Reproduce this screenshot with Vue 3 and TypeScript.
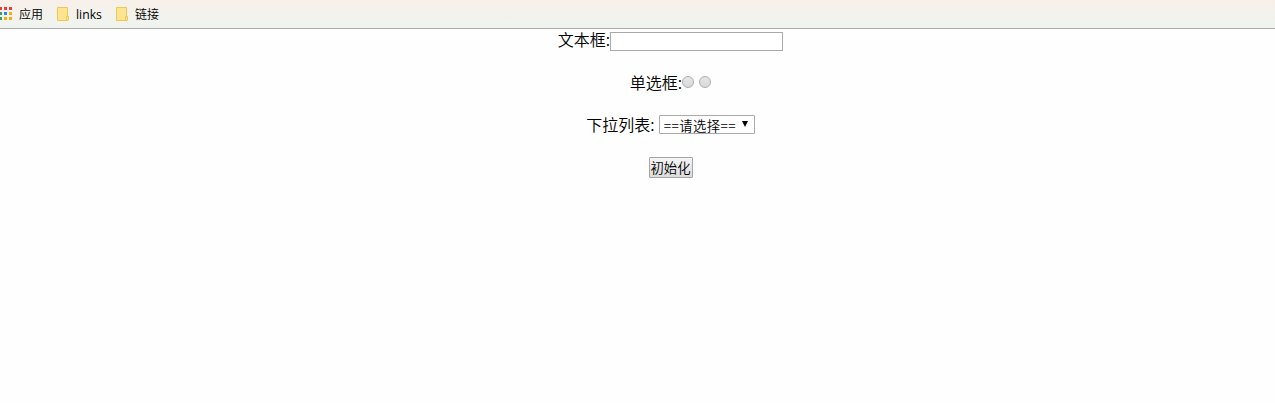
<script setup lang="ts">
import { ref } from 'vue'

interface Dot { x: number; y: number; color: string }

const dots: Dot[] = [
  { x: -1, y: 0, color: '#f23a3a' },
  { x: 4, y: 0, color: '#f23a3a' },
  { x: 9, y: 0, color: '#f23a3a' },
  { x: -1, y: 5, color: '#2fa35a' },
  { x: 4, y: 5, color: '#2a86f8' },
  { x: 9, y: 5, color: '#f8ab0c' },
  { x: -1, y: 10, color: '#2fa35a' },
  { x: 4, y: 10, color: '#f8ab0c' },
  { x: 9, y: 10, color: '#f8ab0c' },
]
const folders: string[] = ['links', '链接']
const text = ref('')
const picked = ref('')

function reset(): void {
  text.value = ''
  picked.value = ''
}
</script>

<template>
  <div class="page">
    <nav class="bookmarks">
      <svg class="apps" width="12" height="13" viewBox="0 0 12 13" shape-rendering="crispEdges">
        <rect v-for="(d, i) in dots" :key="i" :x="d.x" :y="d.y" width="3" height="3" :fill="d.color" />
      </svg>
      <span class="apps-label">应用</span>
      <span v-for="name in folders" :key="name" class="folder">
        <svg width="12" height="14" viewBox="0 0 12 14">
          <path d="M.5.5h10v9h1v3.500l-.5.5H.5z" fill="#ffe592" stroke="#ecc951" />
          <path d="M9.500 13V9.500h1.500" fill="none" stroke="#ecc951" />
        </svg>
        <span class="folder-label">{{ name }}</span>
      </span>
    </nav>
    <main class="form">
      <div class="row first">
        <span class="label">文本框:</span><input v-model="text" class="text" type="text" />
      </div>
      <div class="row radios">
        <span class="label">单选框:</span>
        <input v-model="picked" class="radio" type="radio" value="a" />
        <input v-model="picked" class="radio" type="radio" value="b" />
      </div>
      <div class="row choice">
        <span class="label">下拉列表:</span>
        <div class="select">
          <span class="value">==请选择==</span>
          <svg class="arrow" width="6" height="6" viewBox="0 0 6 6"><path d="M0 0H6L3 6z" fill="#000" /></svg>
        </div>
      </div>
      <div class="row action">
        <button class="button" type="button" @click="reset">初始化</button>
      </div>
    </main>
  </div>
</template>

<style>
body {
  background: #fefefe;
}
</style>

<style scoped>
.page {
  height: 403px;
  overflow: hidden;
  background: #fefefe;
  color: #000;
  font-family: "Noto Sans CJK SC", sans-serif;
  font-weight: 350;
}
.bookmarks {
  display: flex;
  align-items: center;
  box-sizing: border-box;
  height: 29px;
  border-bottom: 1px solid #adadad;
  background: linear-gradient(#f8efe9, #f3f2ed 50%, #eff3ee);
  font-size: 12px;
  line-height: 28px;
  white-space: nowrap;
}
.apps {
  flex: none;
  margin-right: 7px;
  margin-top: -1px;
}
.apps-label {
  width: 38px;
}
.folder {
  display: flex;
  align-items: center;
  width: 59px;
}
.folder svg {
  flex: none;
  margin-right: 7px;
}
.folder:nth-of-type(2) .folder-label {
  margin-top: 2px;
  font-family: "Open Sans", sans-serif;
  font-size: 12.2px;
  font-weight: 400;
  line-height: 26px;
}
.form {
  padding-left: 66px;
}
.row {
  display: flex;
  justify-content: center;
  align-items: center;
  height: 22px;
  margin-bottom: 20px;
  font-size: 16px;
  line-height: 22px;
}
.label {
  flex: none;
  margin-bottom: 2px;
  white-space: nowrap;
}
.text {
  box-sizing: border-box;
  width: 173px;
  height: 19px;
  margin-top: 3px;
  padding: 1px;
  border: 1px solid #a9a9a9;
  background: #fff;
  outline: none;
}
.radios {
  padding-top: 1px;
}
.radio {
  appearance: none;
  box-sizing: border-box;
  width: 12px;
  height: 12px;
  margin: 0 5px 3px 0;
  border: 1px solid #adadad;
  border-radius: 50%;
  background: linear-gradient(#e6e6e6, #d9d9d9);
}
.radio:last-child {
  margin-right: 0;
}
.select {
  display: flex;
  align-items: center;
  justify-content: space-between;
  box-sizing: border-box;
  width: 96px;
  height: 19px;
  margin: 0 0 1px 4px;
  padding: 0 6px 0 4px;
  border: 1px solid #a9a9a9;
  border-radius: 1px;
  background: #fff;
  font-size: 13.333px;
  line-height: 18px;
  white-space: nowrap;
}
.value {
  margin-top: 2px;
  letter-spacing: 0.45px;
}
.arrow {
  margin-bottom: 2px;
}
.button {
  box-sizing: border-box;
  width: 44px;
  height: 21px;
  padding: 0;
  border: 1px solid #a5a5a5;
  border-radius: 1px;
  background: linear-gradient(#f5f5f5, #dcdcdc);
  color: #000;
  font-family: inherit;
  font-size: 13.333px;
  font-weight: inherit;
  line-height: 19px;
  white-space: nowrap;
}
</style>
